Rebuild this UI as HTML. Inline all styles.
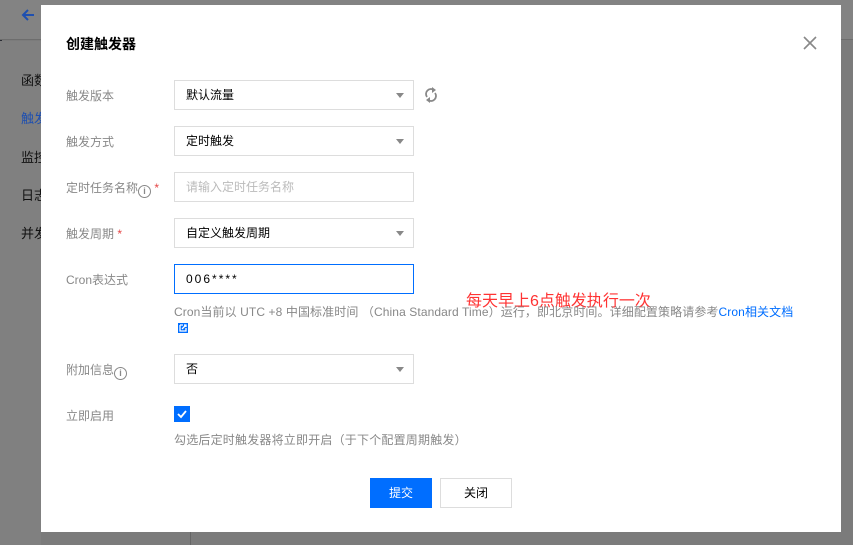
<!DOCTYPE html>
<html><head><meta charset="utf-8"><style>
*{box-sizing:border-box;margin:0;padding:0}
body{width:853px;height:545px;overflow:hidden;background:#7b7b7b;font-family:"Liberation Sans","Noto Sans CJK SC",sans-serif;font-size:12px;position:relative}
.abs{position:absolute}
.top{left:0;top:0;width:853px;height:40px;background:#838383;border-bottom:1px solid #6d6d6d}
.side{left:0;top:41px;width:41px;height:504px;background:#808080}
.sb{left:0;top:0;width:2px;height:545px;background:#2a2c33}
.nav{left:21px;font-size:13px;color:#111;white-space:nowrap;overflow:hidden;width:20px}
.modal{left:41px;top:5px;width:800px;height:527px;background:#fff}
.lbl{left:66px;color:#888;font-size:12px}
.inp{left:174px;width:240px;height:30px;border:1px solid #ddd;background:#fff;padding-left:11px;line-height:28px;color:#000;font-size:12px}
.arr{position:absolute;right:9px;top:12px;width:0;height:0;border-left:4px solid transparent;border-right:4px solid transparent;border-top:5px solid #888}
.req{color:#e54545}
</style></head><body>
<div class="abs sb"></div>
<div class="abs top"></div>
<div class="abs side"></div>
<svg class="abs" style="left:20px;top:7px" width="16" height="16" viewBox="0 0 16 16"><path d="M14 8H3M8 3L3 8l5 5" stroke="#1e4fb0" stroke-width="2" fill="none"/></svg>
<div class="abs nav" style="top:70px">函数</div>
<div class="abs nav" style="top:108px;color:#1e4fb0">触发</div>
<div class="abs nav" style="top:147px">监控</div>
<div class="abs nav" style="top:185px">日志</div>
<div class="abs nav" style="top:223px">并发</div>
<div class="abs" style="left:190px;top:532px;width:1px;height:13px;background:#666"></div>
<div class="abs modal"></div>
<div class="abs" style="left:66px;top:34px;font-size:14px;font-weight:bold;color:#000">创建触发器</div>
<svg class="abs" style="left:803px;top:36px" width="14" height="14" viewBox="0 0 14 14"><path d="M1 1L13 13M13 1L1 13" stroke="#888" stroke-width="1.6"/></svg>

<div class="abs lbl" style="top:87px">触发版本</div>
<div class="abs inp" style="top:80px">默认流量<span class="arr"></span></div>
<svg class="abs" style="left:424px;top:87px" width="14" height="16" viewBox="0 0 14 16"><path d="M3 10A5 5 0 0 1 10 3M11 6A5 5 0 0 1 4 13" stroke="#888" stroke-width="1.8" fill="none"/><path d="M8 0l4 3-4 3z M6 16l-4-3 4-3z" fill="#888"/></svg>

<div class="abs lbl" style="top:179px">定时任务名称<span style="display:inline-block;width:13px;height:13px;border:1.3px solid #888;border-radius:50%;font-size:9px;line-height:10px;text-align:center;font-weight:bold;vertical-align:-2px">i</span> <span class="req">*</span></div>
<div class="abs inp" style="top:172px;color:#bbb">请输入定时任务名称</div>

<div class="abs lbl" style="top:133px">触发方式</div>
<div class="abs inp" style="top:126px">定时触发<span class="arr"></span></div>

<div class="abs lbl" style="top:225px">触发周期 <span class="req">*</span></div>
<div class="abs inp" style="top:218px">自定义触发周期<span class="arr"></span></div>

<div class="abs lbl" style="top:271px">Cron表达式</div>
<div class="abs inp" style="top:264px;border-color:#006eff;letter-spacing:2px">006****</div>
<div class="abs" style="left:466px;top:287px;color:#f33;font-size:16px;white-space:nowrap">每天早上6点触发执行一次</div>
<div class="abs" style="left:174px;top:303px;color:#888;white-space:nowrap;letter-spacing:0.1px">Cron当前以 UTC +8 中国标准时间 （China Standard Time）运行，即北京时间。详细配置策略请参考<span style="color:#006eff">Cron相关文档</span></div>
<svg class="abs" style="left:178px;top:323px" width="10" height="10" viewBox="0 0 10 10"><rect x="0" y="0" width="10" height="10" fill="#006eff"/><path d="M2 2h3M2 2v6h6V5M4 6l4-4M6 2h2v2" stroke="#fff" stroke-width="1.3" fill="none"/></svg>

<div class="abs lbl" style="top:361px">附加信息<span style="display:inline-block;width:13px;height:13px;border:1.3px solid #888;border-radius:50%;font-size:9px;line-height:10px;text-align:center;font-weight:bold;vertical-align:-2px">i</span></div>
<div class="abs inp" style="top:354px">否<span class="arr"></span></div>

<div class="abs lbl" style="top:407px">立即启用</div>
<div class="abs" style="left:174px;top:406px;width:16px;height:16px;background:#006eff"><svg width="16" height="16" viewBox="0 0 16 16"><path d="M4 8l3 3 5-6" stroke="#fff" stroke-width="1.8" fill="none"/></svg></div>
<div class="abs" style="left:174px;top:431px;color:#888;white-space:nowrap;letter-spacing:0.2px">勾选后定时触发器将立即开启（于下个配置周期触发）</div>

<div class="abs" style="left:370px;top:478px;width:62px;height:30px;background:#006eff;color:#fff;text-align:center;line-height:30px">提交</div>
<div class="abs" style="left:440px;top:478px;width:72px;height:30px;border:1px solid #ddd;color:#000;text-align:center;line-height:28px">关闭</div>
</body></html>
